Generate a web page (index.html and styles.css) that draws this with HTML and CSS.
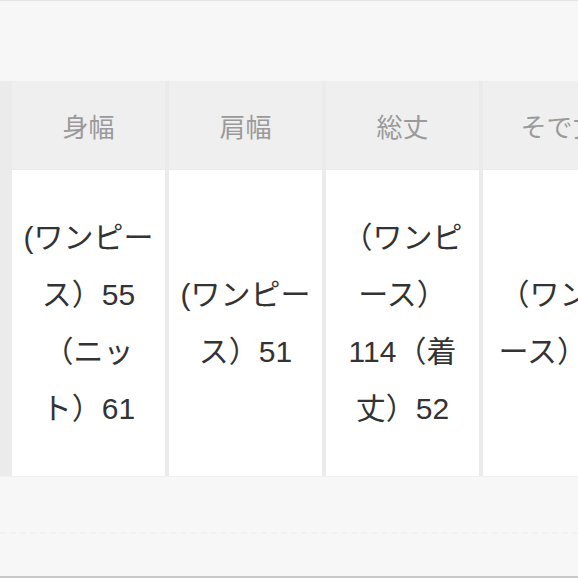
FILE: index.html
```html
<!DOCTYPE html>
<html lang="ja">
<head>
<meta charset="utf-8">
<title>サイズ表</title>
<link rel="stylesheet" href="styles.css">
</head>
<body>
<div class="page">
  <div class="top"></div>
  <div class="table-wrap">
    <div class="size-table">
      <div class="th">身幅</div>
      <div class="th">肩幅</div>
      <div class="th">総丈</div>
      <div class="th">そで丈</div>
      <div class="td">(ワンピース）55（ニット）61</div>
      <div class="td">(ワンピース）51</div>
      <div class="td">（ワンピース）114（着丈）52</div>
      <div class="td">（ワンピース）58</div>
    </div>
  </div>
  <div class="bottom"><div class="dash"></div></div>
</div>
</body>
</html>
```
FILE: styles.css
```css
html, body {
  margin: 0;
  padding: 0;
  background: #f7f7f7;
}
.page {
  width: 578px;
  height: 578px;
  overflow: hidden;
  display: flex;
  flex-direction: column;
  font-family: "Liberation Sans", "Noto Sans CJK JP", sans-serif;
}
.top {
  height: 80px;
  border-top: 1px solid #e4e4e4;
  background: #f7f7f7;
}
.table-wrap {
  overflow: hidden;
  background: #ebebeb;
  padding-left: 12px;
  border-bottom: 1px solid #f1f1f1;
}
.size-table {
  display: grid;
  grid-template-columns: repeat(4, 153px);
  grid-template-rows: 88px 306px;
  column-gap: 4px;
  row-gap: 1px;
  width: 624px;
}
.th {
  background: #efefef;
  color: #9a9a9a;
  font-size: 26px;
  display: flex;
  align-items: center;
  justify-content: center;
  white-space: nowrap;
}
.td {
  background: #ffffff;
  color: #333333;
  font-size: 30px;
  line-height: 57px;
  padding: 0 10px;
  display: flex;
  align-items: center;
  justify-content: center;
  text-align: center;
  line-break: normal;
  word-break: normal;
}
.bottom {
  flex: 1;
  background: #f7f7f7;
  border-bottom: 2px solid #c9c9c9;
  display: flex;
  flex-direction: column;
  justify-content: center;
}
.dash {
  margin-top: 12px;
  border-top: 2px dashed #f2f2f2;
}
```
